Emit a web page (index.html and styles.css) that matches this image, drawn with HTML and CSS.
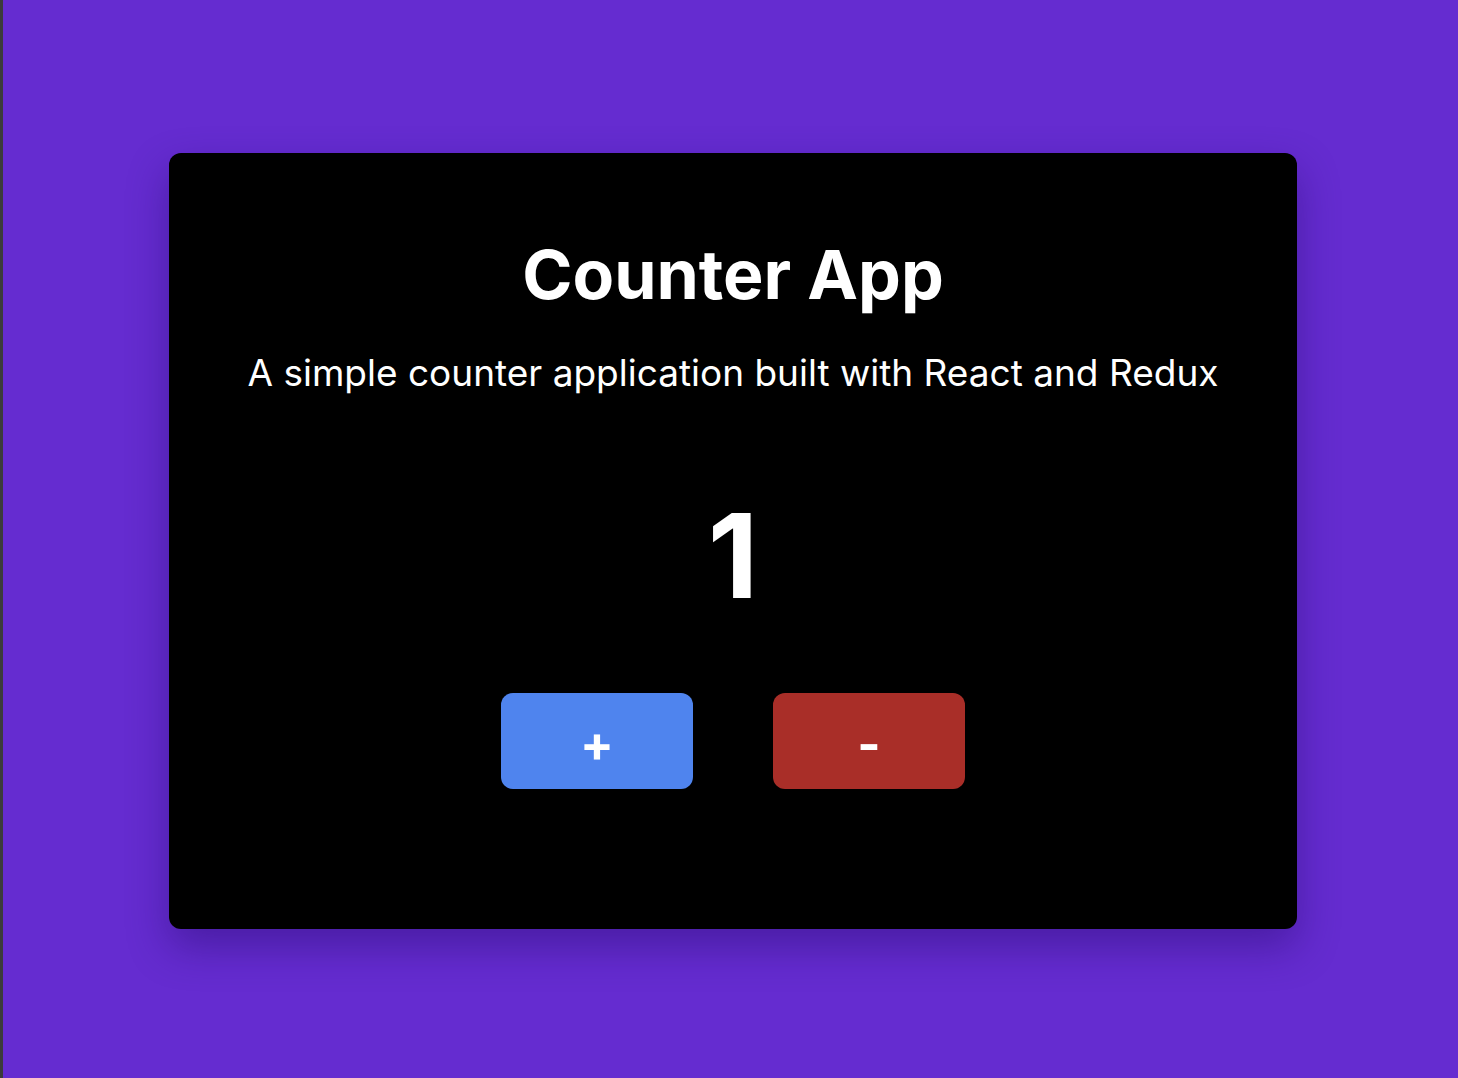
FILE: index.html
```html
<!DOCTYPE html>
<html lang="en">
<head>
<meta charset="utf-8">
<title>Counter App</title>
<link rel="stylesheet" href="styles.css">
</head>
<body>
<div class="edge"></div>
<main class="stage">
  <section class="card">
    <h1 class="title">Counter App</h1>
    <p class="subtitle">A simple counter application built with React and Redux</p>
    <div class="count">1</div>
    <div class="actions">
      <button class="btn btn-inc">+</button>
      <button class="btn btn-dec">-</button>
    </div>
  </section>
</main>
</body>
</html>
```
FILE: styles.css
```css
html, body {
  margin: 0;
  padding: 0;
  height: 100%;
}
body {
  display: flex;
  background: #652cd0;
  font-family: Inter, "Noto Sans", "DejaVu Sans", sans-serif;
  color: #fff;
}
.edge {
  width: 3px;
  flex: none;
  background: #3b3b3b;
}
.stage {
  flex: 1;
  display: flex;
  align-items: center;
  justify-content: center;
  padding-left: 5px;
  padding-top: 4px;
}
.card {
  width: 1128px;
  height: 776px;
  box-sizing: border-box;
  background: #000;
  border-radius: 12px;
  box-shadow: 0 18px 40px rgba(40, 10, 110, 0.45);
  display: flex;
  flex-direction: column;
  align-items: center;
  padding-top: 79px;
}
.title {
  margin: 0;
  font-size: 68px;
  line-height: 84px;
  font-weight: 700;
}
.subtitle {
  margin: 39px 0 0;
  font-size: 37px;
  line-height: 36px;
  font-weight: 400;
}
.count {
  margin-top: 106px;
  font-size: 117px;
  line-height: 117px;
  font-weight: 700;
}
.actions {
  margin-top: 79px;
  display: flex;
  gap: 80px;
}
.btn {
  width: 192px;
  height: 96px;
  border: none;
  border-radius: 12px;
  color: #fff;
  font-family: inherit;
  font-size: 50px;
  font-weight: 700;
  line-height: 1;
  padding: 6px 0 0;
}
.btn-inc {
  background: #4f84ee;
}
.btn-dec {
  background: #a92e28;
}
```
